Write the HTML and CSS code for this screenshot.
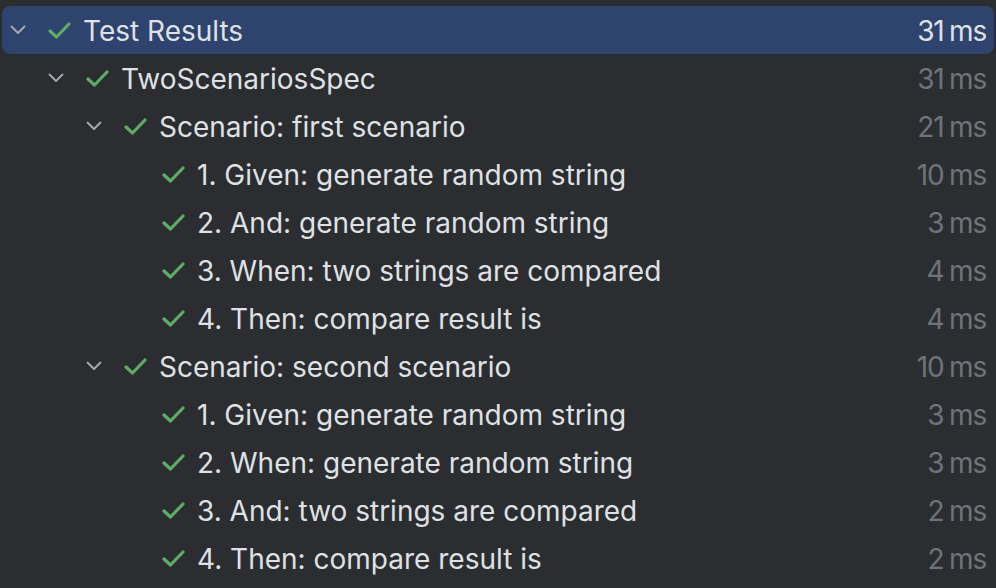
FILE: index.html
```html
<!DOCTYPE html>
<html>
<head>
<meta charset="utf-8">
<link rel="stylesheet" href="styles.css">
</head>
<body>
<div class="tree">
  <div class="row selected l0"><span class="chev"><svg width="16" height="10" viewBox="0 0 16 10"><polyline points="1.5,1.5 8,8 14.5,1.5"/></svg></span><span class="check"><svg width="23" height="17" viewBox="0 0 23 17"><polyline points="2,9 8.5,15 21,2"/></svg></span><span class="label">Test Results</span><span class="time">31 ms</span></div>
  <div class="row l1"><span class="chev"><svg width="16" height="10" viewBox="0 0 16 10"><polyline points="1.5,1.5 8,8 14.5,1.5"/></svg></span><span class="check"><svg width="23" height="17" viewBox="0 0 23 17"><polyline points="2,9 8.5,15 21,2"/></svg></span><span class="label">TwoScenariosSpec</span><span class="time">31 ms</span></div>
  <div class="row l2"><span class="chev"><svg width="16" height="10" viewBox="0 0 16 10"><polyline points="1.5,1.5 8,8 14.5,1.5"/></svg></span><span class="check"><svg width="23" height="17" viewBox="0 0 23 17"><polyline points="2,9 8.5,15 21,2"/></svg></span><span class="label">Scenario: first scenario</span><span class="time">21 ms</span></div>
  <div class="row l3"><span class="chev"></span><span class="check"><svg width="23" height="17" viewBox="0 0 23 17"><polyline points="2,9 8.5,15 21,2"/></svg></span><span class="label">1. Given: generate random string</span><span class="time">10 ms</span></div>
  <div class="row l3"><span class="chev"></span><span class="check"><svg width="23" height="17" viewBox="0 0 23 17"><polyline points="2,9 8.5,15 21,2"/></svg></span><span class="label">2. And: generate random string</span><span class="time">3 ms</span></div>
  <div class="row l3"><span class="chev"></span><span class="check"><svg width="23" height="17" viewBox="0 0 23 17"><polyline points="2,9 8.5,15 21,2"/></svg></span><span class="label">3. When: two strings are compared</span><span class="time">4 ms</span></div>
  <div class="row l3"><span class="chev"></span><span class="check"><svg width="23" height="17" viewBox="0 0 23 17"><polyline points="2,9 8.5,15 21,2"/></svg></span><span class="label">4. Then: compare result is</span><span class="time">4 ms</span></div>
  <div class="row l2"><span class="chev"><svg width="16" height="10" viewBox="0 0 16 10"><polyline points="1.5,1.5 8,8 14.5,1.5"/></svg></span><span class="check"><svg width="23" height="17" viewBox="0 0 23 17"><polyline points="2,9 8.5,15 21,2"/></svg></span><span class="label">Scenario: second scenario</span><span class="time">10 ms</span></div>
  <div class="row l3"><span class="chev"></span><span class="check"><svg width="23" height="17" viewBox="0 0 23 17"><polyline points="2,9 8.5,15 21,2"/></svg></span><span class="label">1. Given: generate random string</span><span class="time">3 ms</span></div>
  <div class="row l3"><span class="chev"></span><span class="check"><svg width="23" height="17" viewBox="0 0 23 17"><polyline points="2,9 8.5,15 21,2"/></svg></span><span class="label">2. When: generate random string</span><span class="time">3 ms</span></div>
  <div class="row l3"><span class="chev"></span><span class="check"><svg width="23" height="17" viewBox="0 0 23 17"><polyline points="2,9 8.5,15 21,2"/></svg></span><span class="label">3. And: two strings are compared</span><span class="time">2 ms</span></div>
  <div class="row l3"><span class="chev"></span><span class="check"><svg width="23" height="17" viewBox="0 0 23 17"><polyline points="2,9 8.5,15 21,2"/></svg></span><span class="label">4. Then: compare result is</span><span class="time">2 ms</span></div>
</div>
</body>
</html>
```
FILE: styles.css
```css
html, body {
  margin: 0;
  padding: 0;
  background: #2B2D30;
  width: 996px;
  height: 588px;
  overflow: hidden;
}
.tree {
  padding: 6px 2px 0 2px;
  font-family: Inter, "Noto Sans", sans-serif;
  font-size: 28px;
  color: #DFE1E5;
}
.row {
  display: flex;
  align-items: center;
  height: 48px;
  padding-right: 7px;
  border-radius: 8px;
}
.row.selected {
  background: #2E436E;
}
.l0 { padding-left: 8px; }
.l1 { padding-left: 46px; }
.l2 { padding-left: 84px; }
.l3 { padding-left: 122px; }
.chev {
  width: 16px;
  height: 10px;
  display: flex;
  margin-right: 22px;
}
.chev svg polyline {
  fill: none;
  stroke: #A9ACB3;
  stroke-width: 1.8;
  stroke-linecap: round;
  stroke-linejoin: round;
}
.check {
  width: 23px;
  height: 17px;
  display: flex;
  margin-right: 12px;
}
.check svg polyline {
  fill: none;
  stroke: #5FAD65;
  stroke-width: 3.2;
  stroke-linecap: round;
  stroke-linejoin: round;
}
.label {
  flex: 1;
  white-space: nowrap;
  padding-top: 2px;
}
.time {
  color: #6F737A;
  white-space: nowrap;
  padding-top: 2px;
  letter-spacing: -1.2px;
  word-spacing: -1px;
  margin-right: 1px;
}
.selected .time {
  color: #DFE1E5;
}
```
